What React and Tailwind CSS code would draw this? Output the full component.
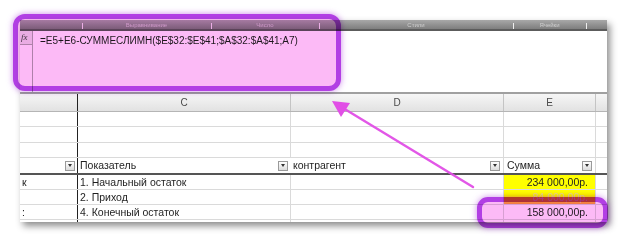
const groups = [
  { w: 'w-[62px]', label: '' },
  { w: 'w-[129px]', label: 'Выравнивание' },
  { w: 'w-[108px]', label: 'Число' },
  { w: 'w-[194px]', label: 'Стили' },
  { w: 'w-[73px]', label: 'Ячейки' },
  { w: 'flex-1', label: '' },
];

const cols = 'grid grid-cols-[57px_213px_213px_92px_12px]';

const Drop = () => (
  <span className="w-[10px] h-[10px] border border-[#9a9a9a] bg-gradient-to-b from-white to-[#dcdcdc] flex items-center justify-center shrink-0">
    <span className="w-0 h-0 border-x-[2.5px] border-x-transparent border-t-[3px] border-t-[#333]" />
  </span>
);

const Row = ({ b, c, e, eCls, h = 'h-[15px]', line = true }) => (
  <div className={`${cols} ${h} shrink-0 ${line ? 'border-b border-[#dadada]' : ''}`}>
    <div className="px-[2px] leading-[14px] overflow-hidden">{b}</div>
    <div className="border-l border-[#222] px-[2px] leading-[14px]">{c}</div>
    <div className="border-l border-[#dadada]" />
    <div className={`border-l border-[#dadada] text-right pr-[7px] leading-[14px] ${eCls || ''}`}>{e}</div>
    <div className="border-l border-[#dadada]" />
  </div>
);

export default function App() {
  return (
    <div className="relative w-[628px] h-[245px] bg-white overflow-hidden font-['Liberation_Sans',Arial,sans-serif] text-[#1e1e1e]">
      <div className="pt-[20px] pl-[20px]">
        <div className="w-[587px] h-[202px] bg-white flex flex-col shadow-[3px_4px_7px_rgba(0,0,0,0.45)] overflow-hidden">
          {/* ribbon group labels */}
          <div className="flex shrink-0 h-[11px] bg-gradient-to-b from-[#a8a8a8] to-[#7e7e7e] border-b-2 border-[#5c5c5c]">
            {groups.map((g, i) => (
              <div key={i} className={`${g.w} relative flex justify-center items-center text-[6px] leading-none text-[#cfcfcf]`}>
                {i > 0 && <span className="absolute left-0 top-[3px] w-px h-[6px] bg-[#eeeeee]" />}
                {g.label}
              </div>
            ))}
          </div>
          {/* formula bar */}
          <div className="flex shrink-0 h-[63px] border-b-2 border-[#a0a0a0]">
            <div className="w-[13px] border-r border-[#b0b0b0] flex flex-col">
              <div className="h-[14px] border-b border-[#b0b0b0] bg-[#ececec] text-[9px] italic leading-[13px] pl-[1px] text-[#444] font-['Liberation_Serif',serif]">fx</div>
            </div>
            <div className="pl-[7px] pt-[3px] text-[10px] leading-[13px]">
              =E5+E6-СУММЕСЛИМН($E$32:$E$41;$A$32:$A$41;A7)
            </div>
          </div>
          {/* column letters */}
          <div className={`${cols} shrink-0 h-[18px] bg-gradient-to-b from-[#f6f6f6] to-[#e2e2e2] border-b border-[#b5b5b5] text-[10px] text-[#4a4a4a] leading-[17px]`}>
            <div />
            <div className="border-l border-[#222] text-center">C</div>
            <div className="border-l border-[#c4c4c4] text-center">D</div>
            <div className="border-l border-[#c4c4c4] text-center">E</div>
            <div className="border-l border-[#c4c4c4]" />
          </div>
          <div className="text-[10.5px] flex flex-col">
            <Row />
            <Row h="h-[16px]" />
            <Row />
            {/* filter header */}
            <div className={`${cols} h-[15px] shrink-0`}>
              <div className="flex justify-end items-center pr-[2px]"><Drop /></div>
              <div className="border-l border-[#222] flex items-center justify-between pl-[2px] pr-[2px]">
                <span>Показатель</span><Drop />
              </div>
              <div className="flex items-center justify-between pl-[3px] pr-[3px]">
                <span>контрагент</span><Drop />
              </div>
              <div className="border-l border-[#dadada] flex items-center justify-between pl-[3px] pr-[3px]">
                <span>Сумма</span><Drop />
              </div>
              <div className="border-l border-[#dadada]" />
            </div>
            <div className="h-[2px] bg-[#555] shrink-0" />
            <Row b="к" c="1. Начальный остаток" e="234 000,00р." eCls="bg-[#ffff00]" />
            <Row c="2. Приход" e="84 000,00р." eCls="bg-gradient-to-b from-[#ffff00] from-40% to-[#f3a548] text-[#e8d890]" />
            <Row b=":" c="4. Конечный остаток" e="158 000,00р." />
            <Row line={false} />
          </div>
        </div>
      </div>

      {/* highlight around formula */}
      <div className="absolute left-[13px] top-[14px] w-[328px] h-[77px] rounded-[12px] border-[5px] border-[#b23fe4] bg-[#fcbaf6] mix-blend-multiply shadow-[0_0_6px_rgba(170,60,220,0.6)]" />
      {/* highlight around result */}
      <div className="absolute left-[477px] top-[197px] w-[131px] h-[31px] rounded-[11px] border-[5px] border-[#b23fe4] bg-[#fcbaf6] mix-blend-multiply shadow-[0_0_6px_rgba(170,60,220,0.6)]" />

      <svg className="absolute left-0 top-0" width="628" height="245" viewBox="0 0 628 245">
        <line x1="473" y1="187" x2="343" y2="108" stroke="#e14fe6" strokeWidth="2.5" strokeLinecap="round" opacity="0.95" />
        <polygon points="332,101 350,103 341,117" fill="#e14fe6" />
      </svg>
    </div>
  );
}
